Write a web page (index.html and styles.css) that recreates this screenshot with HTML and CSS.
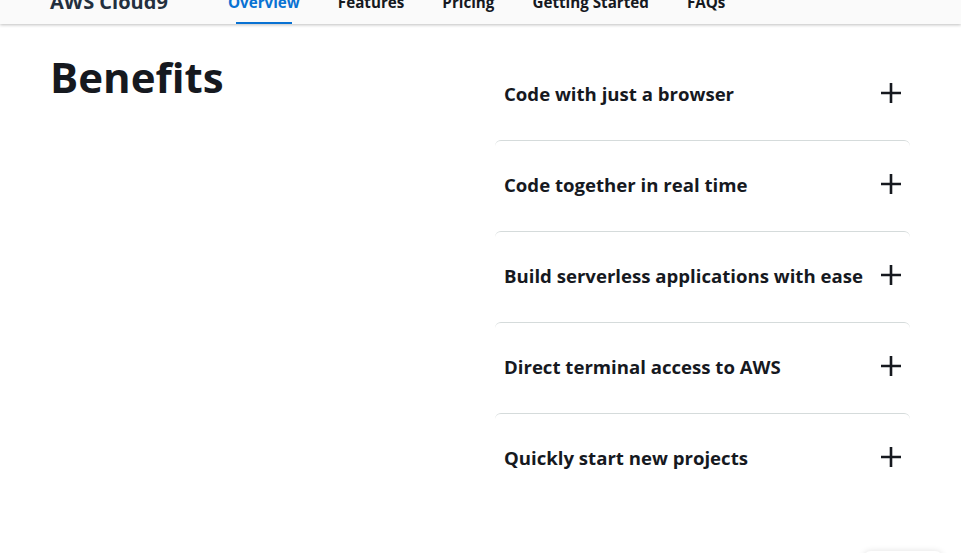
FILE: index.html
```html
<!DOCTYPE html>
<html lang="en">
<head>
<meta charset="utf-8">
<title>AWS Cloud9 - Benefits</title>
<link rel="stylesheet" href="styles.css">
</head>
<body>
<header class="topbar">
  <div class="topbar-inner">
    <span class="brand">AWS Cloud9</span>
    <nav class="nav">
      <a class="nav-item active" href="#">Overview</a>
      <a class="nav-item" href="#">Features</a>
      <a class="nav-item" href="#">Pricing</a>
      <a class="nav-item" href="#">Getting Started</a>
      <a class="nav-item" href="#">FAQs</a>
    </nav>
  </div>
</header>
<main class="benefits">
  <h2 class="title">Benefits</h2>
  <div class="accordion">
    <div class="acc-item"><span class="acc-label">Code with just a browser</span><svg class="plus" viewBox="0 0 22 22"><path d="M11 1v20M1 11h20"/></svg></div>
    <div class="acc-item"><span class="acc-label">Code together in real time</span><svg class="plus" viewBox="0 0 22 22"><path d="M11 1v20M1 11h20"/></svg></div>
    <div class="acc-item"><span class="acc-label">Build serverless applications with ease</span><svg class="plus" viewBox="0 0 22 22"><path d="M11 1v20M1 11h20"/></svg></div>
    <div class="acc-item"><span class="acc-label">Direct terminal access to AWS</span><svg class="plus" viewBox="0 0 22 22"><path d="M11 1v20M1 11h20"/></svg></div>
    <div class="acc-item"><span class="acc-label">Quickly start new projects</span><svg class="plus" viewBox="0 0 22 22"><path d="M11 1v20M1 11h20"/></svg></div>
  </div>
</main>
<div class="floater"></div>
</body>
</html>
```
FILE: styles.css
```css
html, body {
  margin: 0;
  padding: 0;
  background: #ffffff;
  color: #16191f;
  font-family: "Open Sans", "Noto Sans", sans-serif;
}
.topbar {
  height: 24px;
  background: #fafafa;
  box-shadow: 0 1px 3px rgba(0,0,0,0.25);
  overflow: hidden;
  position: relative;
  z-index: 2;
}
.topbar-inner {
  display: flex;
  align-items: flex-start;
  margin-top: -9px;
  padding-left: 50px;
}
.brand {
  font-size: 20px;
  font-weight: 700;
  line-height: 24px;
  margin-top: -1px;
  color: #232f3e;
  width: 178px;
  flex: none;
}
.nav {
  display: flex;
  gap: 38px;
}
.nav-item {
  position: relative;
  font-size: 15.2px;
  font-weight: 700;
  line-height: 22px;
  padding-bottom: 12px;
  text-decoration: none;
  color: #16191f;
}
.nav-item.active {
  color: #0972d3;
}
.nav-item.active::after {
  content: "";
  position: absolute;
  left: 8px;
  right: 8px;
  bottom: 0;
  height: 3px;
  background: #0972d3;
}
.benefits {
  display: grid;
  grid-template-columns: 415px 415px;
  column-gap: 30px;
  padding: 0 50px;
  margin-top: 25px;
}
.title {
  margin: 0;
  padding-top: 2px;
  font-size: 42px;
  font-weight: 700;
  line-height: 52px;
  color: #16191f;
}
.accordion {
  display: flex;
  flex-direction: column;
}
.acc-item {
  display: flex;
  align-items: center;
  justify-content: space-between;
  height: 90px;
  padding: 0 8px 4px 9px;
  box-sizing: border-box;
  height: 91px;
  border-top: 1px solid #d5dbdb;
  border-radius: 6px 6px 0 0;
}
.acc-item:first-child {
  border-top: 1px solid transparent;
}
.acc-label {
  font-size: 18.6px;
  font-weight: 700;
  color: #16191f;
}
.plus {
  width: 22px;
  height: 22px;
  fill: none;
  stroke: #16191f;
  stroke-width: 2.6;
}
.floater {
  position: fixed;
  right: 18px;
  bottom: -60px;
  width: 80px;
  height: 62px;
  border-radius: 8px;
  background: #fff;
  box-shadow: 0 0 6px rgba(0,0,0,0.12);
}
```
